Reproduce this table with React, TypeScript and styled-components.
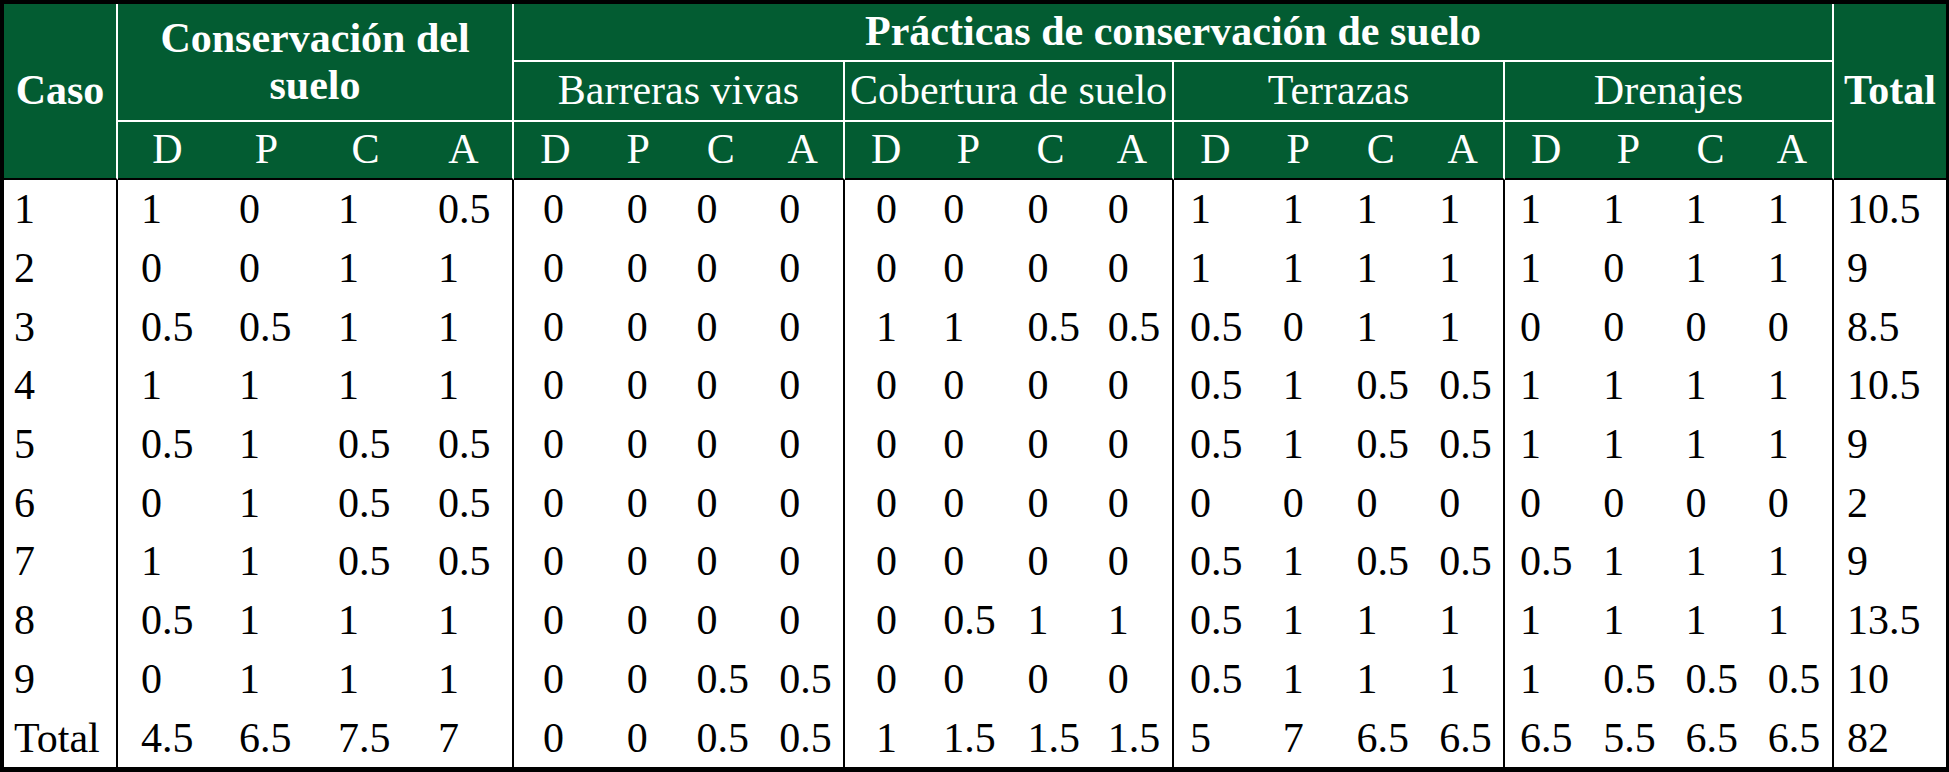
import React from "react";
import styled, { createGlobalStyle } from "styled-components";

const GREEN = "#035c32";

const GlobalStyle = createGlobalStyle`
  html, body { margin: 0; padding: 0; background: #ffffff; }
  * { box-sizing: border-box; }
`;

const Frame = styled.div`
  width: 1949px;
  height: 772px;
  background: #ffffff;
  border-style: solid;
  border-color: #000000;
  border-width: 4px 3px 5px 4px;
  font-family: "Liberation Serif", "Times New Roman", serif;
  font-size: 42px;
`;

const Grid = styled.div`
  display: grid;
  grid-template-columns:
    114px repeat(4, 99px) repeat(4, 82.75px) repeat(4, 82.25px)
    repeat(4, 82.75px) repeat(4, 82.25px) 112px;
  grid-template-rows: 58px 60px 58px repeat(10, 58.7px);
`;

const HeadCell = styled.div<{
  $col: string;
  $row: string;
  $right?: boolean;
  $bottom?: "white" | "black";
  $bold?: boolean;
}>`
  grid-column: ${(p) => p.$col};
  grid-row: ${(p) => p.$row};
  background: ${GREEN};
  color: #ffffff;
  display: flex;
  align-items: center;
  justify-content: center;
  text-align: center;
  line-height: 1.12;
  font-weight: ${(p) => (p.$bold ? 700 : 400)};
  border-right: ${(p) => (p.$right ? "2px solid #ffffff" : "none")};
  border-bottom: ${(p) =>
    p.$bottom === "white"
      ? "2px solid #ffffff"
      : p.$bottom === "black"
      ? "2px solid #000000"
      : "none"};
  white-space: normal;
  overflow: hidden;
`;

const DataCell = styled.div<{ $right?: boolean; $pad: number }>`
  display: flex;
  align-items: center;
  justify-content: flex-start;
  padding-left: ${(p) => p.$pad}px;
  color: #000000;
  line-height: 1;
  white-space: nowrap;
  border-right: ${(p) => (p.$right ? "2px solid #000000" : "none")};
`;

const groups = ["Barreras vivas", "Cobertura de suelo", "Terrazas", "Drenajes"];
const letters = ["D", "P", "C", "A"];

const pads = [
  23, 22, 22, 23,
  29, 30, 17, 17,
  31, 16, 18, 16,
  16, 26, 17, 17,
  15, 16, 16, 16,
];

type Row = { caso: string; values: (number | string)[] };

const rows: Row[] = [
  { caso: "1", values: [1, 0, 1, 0.5, 0, 0, 0, 0, 0, 0, 0, 0, 1, 1, 1, 1, 1, 1, 1, 1, 10.5] },
  { caso: "2", values: [0, 0, 1, 1, 0, 0, 0, 0, 0, 0, 0, 0, 1, 1, 1, 1, 1, 0, 1, 1, 9] },
  { caso: "3", values: [0.5, 0.5, 1, 1, 0, 0, 0, 0, 1, 1, 0.5, 0.5, 0.5, 0, 1, 1, 0, 0, 0, 0, 8.5] },
  { caso: "4", values: [1, 1, 1, 1, 0, 0, 0, 0, 0, 0, 0, 0, 0.5, 1, 0.5, 0.5, 1, 1, 1, 1, 10.5] },
  { caso: "5", values: [0.5, 1, 0.5, 0.5, 0, 0, 0, 0, 0, 0, 0, 0, 0.5, 1, 0.5, 0.5, 1, 1, 1, 1, 9] },
  { caso: "6", values: [0, 1, 0.5, 0.5, 0, 0, 0, 0, 0, 0, 0, 0, 0, 0, 0, 0, 0, 0, 0, 0, 2] },
  { caso: "7", values: [1, 1, 0.5, 0.5, 0, 0, 0, 0, 0, 0, 0, 0, 0.5, 1, 0.5, 0.5, 0.5, 1, 1, 1, 9] },
  { caso: "8", values: [0.5, 1, 1, 1, 0, 0, 0, 0, 0, 0.5, 1, 1, 0.5, 1, 1, 1, 1, 1, 1, 1, 13.5] },
  { caso: "9", values: [0, 1, 1, 1, 0, 0, 0.5, 0.5, 0, 0, 0, 0, 0.5, 1, 1, 1, 1, 0.5, 0.5, 0.5, 10] },
  { caso: "Total", values: [4.5, 6.5, 7.5, 7, 0, 0, 0.5, 0.5, 1, 1.5, 1.5, 1.5, 5, 7, 6.5, 6.5, 6.5, 5.5, 6.5, 6.5, 82] },
];

export default function App() {
  return (
    <>
      <GlobalStyle />
      <Frame>
        <Grid>
          <HeadCell $col="1" $row="1 / span 3" $right $bottom="black" $bold>
            Caso
          </HeadCell>
          <HeadCell $col="2 / span 4" $row="1 / span 2" $right $bottom="white" $bold>
            Conservación del suelo
          </HeadCell>
          <HeadCell $col="6 / span 16" $row="1" $right $bottom="white" $bold>
            Prácticas de conservación de suelo
          </HeadCell>
          <HeadCell $col="22" $row="1 / span 3" $bottom="black" $bold>
            Total
          </HeadCell>
          {groups.map((g, i) => (
            <HeadCell key={g} $col={`${6 + i * 4} / span 4`} $row="2" $right $bottom="white">
              {g}
            </HeadCell>
          ))}
          {Array.from({ length: 20 }).map((_, i) => (
            <HeadCell
              key={`l${i}`}
              $col={`${2 + i}`}
              $row="3"
              $right={i % 4 === 3}
              $bottom="black"
            >
              {letters[i % 4]}
            </HeadCell>
          ))}
          {rows.map((r) => (
            <React.Fragment key={r.caso}>
              <DataCell $right $pad={10}>
                {r.caso}
              </DataCell>
              {r.values.map((v, i) => (
                <DataCell
                  key={i}
                  $right={i < 20 && i % 4 === 3}
                  $pad={i < 20 ? pads[i] : 13}
                >
                  {String(v)}
                </DataCell>
              ))}
            </React.Fragment>
          ))}
        </Grid>
      </Frame>
    </>
  );
}
